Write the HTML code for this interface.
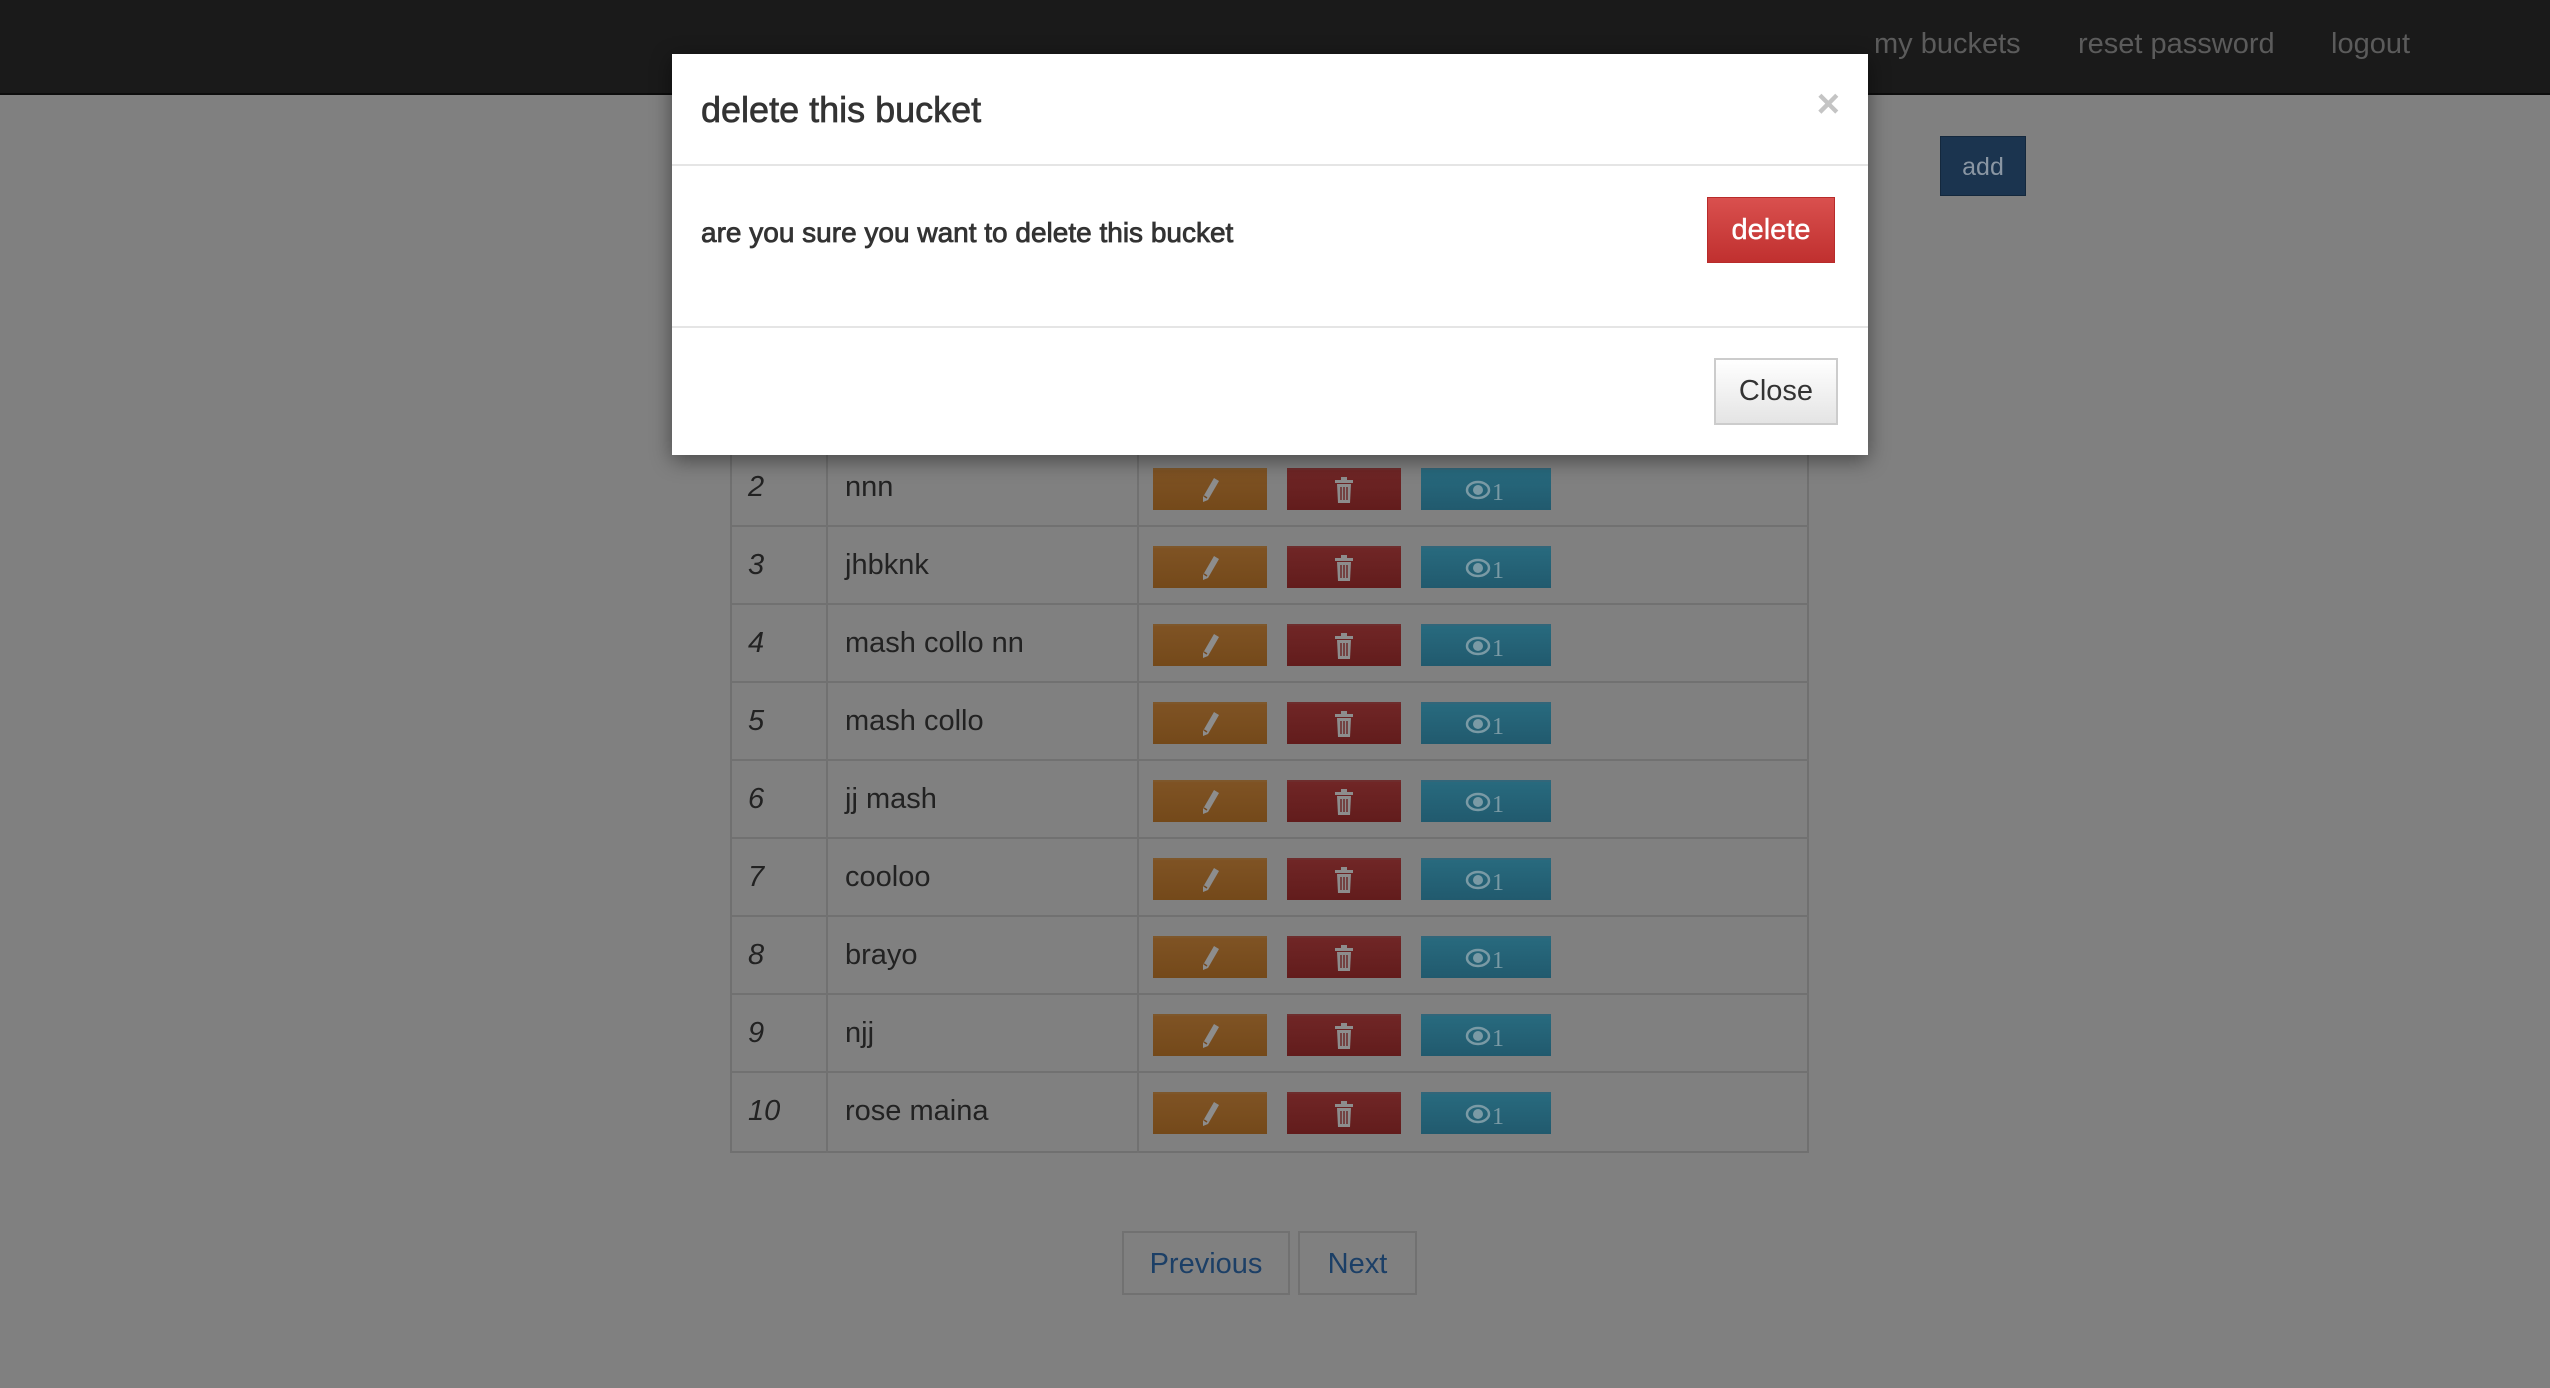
<!DOCTYPE html>
<html><head><meta charset="utf-8"><style>
*{box-sizing:border-box;margin:0;padding:0}
body{width:2550px;height:1388px;background:#808080;font-family:"Liberation Sans",Arial,sans-serif;position:relative;overflow:hidden}
.a{position:absolute}
.nav{left:0;top:0;width:2550px;height:95px;background:#1a1a1a;border-bottom:2px solid #0d0d0d}
.nl{color:#5b5b5b;font-size:29px;top:28px}
.add{left:1940px;top:136px;width:86px;height:60px;background:#1b344f;color:#8a96a3;font-size:25px;text-align:center;line-height:60px;border:1px solid #14283d}
.tbl{left:730px;top:449px;width:1079px;height:704px;border:2px solid #707070;border-top:none}
.row{left:0;width:1077px;height:78px;border-bottom:2px solid #717171}
.vl{top:0;width:2px;height:704px;background:#717171}
.num{left:16px;font-style:italic;font-size:29px;color:#222;top:22px}
.nm{left:113px;font-size:29px;color:#222;top:22px}
.b{top:19px;height:42px;border-top:2px solid rgba(255,255,255,.08)}
.o{left:423px;width:114px;background:linear-gradient(#7f5324,#74491a)}
.r{left:557px;width:114px;background:linear-gradient(#702626,#621c1c)}
.bl{left:691px;width:130px;background:linear-gradient(#286a7e,#215a6e)}
.b svg{position:absolute;left:50%;top:50%;transform:translate(-50%,-50%)}
.pg{top:1231px;height:64px;border:2px solid #717171;color:#1c3f66;font-size:29px;text-align:center;line-height:62px}
.modal{left:672px;top:54px;width:1196px;height:401px;background:#fff;box-shadow:0 5px 20px rgba(0,0,0,.45)}
</style></head><body>
<div class="a nav"></div>
<div class="a nl" style="left:1874px">my buckets</div>
<div class="a nl" style="left:2078px">reset password</div>
<div class="a nl" style="left:2331px">logout</div>
<div class="a add">add</div>

<div class="a tbl">
<div class="a vl" style="left:94px"></div>
<div class="a vl" style="left:405px"></div>
<div class="a row" style="top:0"><span class="a num">2</span><span class="a nm">nnn</span></div>
<div class="a row" style="top:78px"><span class="a num">3</span><span class="a nm">jhbknk</span></div>
<div class="a row" style="top:156px"><span class="a num">4</span><span class="a nm">mash collo nn</span></div>
<div class="a row" style="top:234px"><span class="a num">5</span><span class="a nm">mash collo</span></div>
<div class="a row" style="top:312px"><span class="a num">6</span><span class="a nm">jj mash</span></div>
<div class="a row" style="top:390px"><span class="a num">7</span><span class="a nm">cooloo</span></div>
<div class="a row" style="top:468px"><span class="a num">8</span><span class="a nm">brayo</span></div>
<div class="a row" style="top:546px"><span class="a num">9</span><span class="a nm">njj</span></div>
<div class="a row" style="top:624px;border-bottom:none"><span class="a num">10</span><span class="a nm">rose maina</span></div>
</div>

<div id="btns"></div>
<script>
var h='';
for(var i=0;i<9;i++){var t=449+i*78;
h+='<div class="a" style="left:730px;top:'+t+'px;width:1px;height:78px">'+
'<div class="a b o"><svg width="22" height="26" viewBox="0 0 22 26"><path d="M15 1l5 3-11 19-5 2 0-5z" fill="#8d8d8d"/><path d="M5 19l3 2" stroke="#75491c" stroke-width="1.5"/></svg></div>'+
'<div class="a b r"><svg width="20" height="28" viewBox="0 0 20 28"><rect x="1" y="4" width="18" height="3" fill="#8d8d8d"/><rect x="7" y="1" width="6" height="3" fill="#8d8d8d"/><path d="M3 8h14l-1 19H4z" fill="#8d8d8d"/><path d="M7 11v13M10 11v13M13 11v13" stroke="#6a2222" stroke-width="1.4"/></svg></div>'+
'<div class="a b bl"><svg width="42" height="26" viewBox="0 0 42 26"><ellipse cx="13" cy="13" rx="11" ry="8" fill="none" stroke="#7a9aa5" stroke-width="2.5"/><circle cx="13" cy="13" r="5" fill="#7a9aa5"/><text x="27" y="23" font-family="Liberation Serif" font-size="24" fill="#7a9aa5">1</text></svg></div></div>';}
document.getElementById('btns').innerHTML=h;
</script>

<div class="a pg" style="left:1122px;width:168px">Previous</div>
<div class="a pg" style="left:1298px;width:119px">Next</div>

<div class="a modal">
<div class="a" style="left:29px;top:35px;font-size:36px;color:#333;-webkit-text-stroke:0.7px #333">delete this bucket</div>
<div class="a" style="right:28px;top:28px;font-size:40px;color:#c4c4c4;font-weight:bold">×</div>
<div class="a" style="left:0;top:110px;width:1196px;height:2px;background:#e5e5e5"></div>
<div class="a" style="left:29px;top:163px;font-size:28px;color:#333;-webkit-text-stroke:0.8px #333">are you sure you want to delete this bucket</div>
<div class="a" style="left:1035px;top:143px;width:128px;height:66px;background:linear-gradient(#d9504e,#c0302f);border:1px solid #b82b2a;color:#fff;font-size:29px;text-align:center;line-height:64px;-webkit-text-stroke:0.4px #fff">delete</div>
<div class="a" style="left:0;top:272px;width:1196px;height:2px;background:#e5e5e5"></div>
<div class="a" style="left:1042px;top:304px;width:124px;height:67px;background:linear-gradient(#fff,#e4e4e4);border:2px solid #ccc;color:#333;font-size:29px;text-align:center;line-height:63px">Close</div>
</div>
</body></html>
